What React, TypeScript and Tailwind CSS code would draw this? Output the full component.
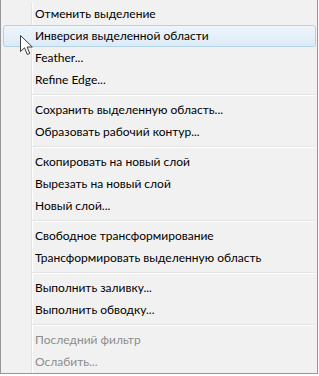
const groups: { label: string; disabled?: boolean; active?: boolean }[][] = [
  [
    { label: "Отменить выделение" },
    { label: "Инверсия выделенной области", active: true },
    { label: "Feather..." },
    { label: "Refine Edge..." },
  ],
  [{ label: "Сохранить выделенную область..." }, { label: "Образовать рабочий контур..." }],
  [
    { label: "Скопировать на новый слой" },
    { label: "Вырезать на новый слой" },
    { label: "Новый слой..." },
  ],
  [{ label: "Свободное трансформирование" }, { label: "Трансформировать выделенную область" }],
  [{ label: "Выполнить заливку..." }, { label: "Выполнить обводку..." }],
  [
    { label: "Последний фильтр", disabled: true },
    { label: "Ослабить...", disabled: true },
  ],
];

function Cursor() {
  return (
    <svg className="absolute left-[20px] top-[35px]" width="14" height="21" viewBox="0 0 14 21">
      <path
        d="M0.5 0.5 L0.5 16.5 L4.5 12.8 L7.3 19.5 L9.8 18.4 L7.1 12 L12.3 12 Z"
        fill="#fff"
        stroke="#3a3a3a"
        strokeWidth="1"
        strokeLinejoin="round"
      />
    </svg>
  );
}

export default function App() {
  return (
    <div className="relative h-[376px] w-[319px] bg-white" style={{ fontFamily: 'Lato, "Open Sans", sans-serif' }}>
      <div className="h-[374px] w-[318px] border-x border-b border-[#979797] bg-[#f1f1f1] pt-[3px] pl-[2px] pr-[1px]">
        <div className="bg-[linear-gradient(to_right,transparent_28px,#e2e3e3_28px,#e2e3e3_29px,#ffffff_29px,#ffffff_30px,transparent_30px)]">
          {groups.map((group, gi) => (
            <div key={gi}>
              {gi > 0 ? (
                <div className="flex h-[8px] flex-col justify-center pl-[29px] pr-[1px]">
                  <div className="h-px bg-[#e3e3e3]" />
                  <div className="h-px bg-white" />
                </div>
              ) : null}
              {group.map((item) => (
                <div
                  key={item.label}
                  className={
                    item.active
                      ? "flex h-[22px] items-center rounded-[3px] border border-[#b3d3ea] bg-[linear-gradient(to_bottom,#eef5fb,#dcebf7)] pl-[31px] text-[12px] text-black"
                      : item.disabled
                        ? "flex h-[22px] items-center pl-[32px] text-[12px] text-[#8d8d8d]"
                        : "flex h-[22px] items-center pl-[32px] text-[12px] text-black"
                  }
                >
                  {item.label}
                </div>
              ))}
            </div>
          ))}
        </div>
      </div>
      <Cursor />
    </div>
  );
}
